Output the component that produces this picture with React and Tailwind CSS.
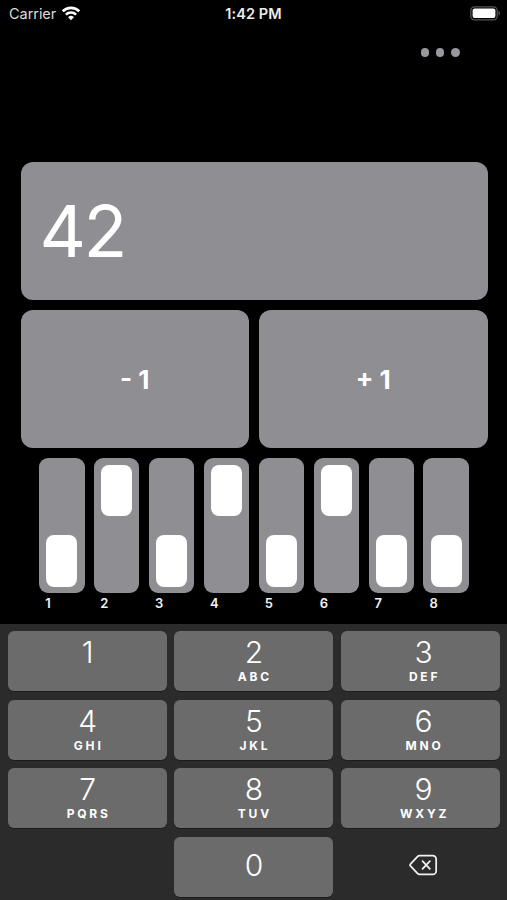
import React, { useState } from "react";

// Keys of the number pad, in reading order
const KEYS = [
  { digit: "1", letters: "" },
  { digit: "2", letters: "ABC" },
  { digit: "3", letters: "DEF" },
  { digit: "4", letters: "GHI" },
  { digit: "5", letters: "JKL" },
  { digit: "6", letters: "MNO" },
  { digit: "7", letters: "PQRS" },
  { digit: "8", letters: "TUV" },
  { digit: "9", letters: "WXYZ" },
];

// Bit positions, lowest first
const BITS = [0, 1, 2, 3, 4, 5, 6, 7];

/**
 * StatusBar shows the carrier, the clock and the battery.
 */
const StatusBar = () => (
  <div className="grid grid-cols-3 items-center h-7 pl-[9px] pr-[6px] text-[14.5px] leading-none">
    <div className="flex items-center gap-[5px] text-[#dcdcdc]">
      <span className="tracking-[-0.05px]">Carrier</span>
      <svg width="20" height="15" viewBox="0 0 20 15" className="mb-[2px]" fill="none" stroke="#fff">
        <path d="M1.7 5.3a11.7 11.7 0 0 1 16.6 0" strokeWidth="2.7" />
        <path d="M4.9 8.7a7.2 7.2 0 0 1 10.2 0" strokeWidth="2.5" />
        <path d="M10 14.2 7.1 11.3a4.1 4.1 0 0 1 5.8 0Z" fill="#fff" stroke="none" />
      </svg>
    </div>
    <span className="pr-[3px] text-center font-semibold text-[#ececec] text-[14.5px] tracking-[0.1px]">
      1:42 PM
    </span>
    <svg className="justify-self-end mb-[2px]" width="31" height="15" viewBox="0 0 31 15">
      <rect x="0.8" y="0.8" width="26.4" height="13" rx="3.8" fill="none" stroke="#555" strokeWidth="1.3" />
      <rect x="2.6" y="2.6" width="22.8" height="9.4" rx="2" fill="#fff" />
      <path d="M28.6 5v4.6c1.7-.6 1.7-4 0-4.6Z" fill="#666" />
    </svg>
  </div>
);

/**
 * BitSwitch is one vertical toggle with its number underneath.
 */
const BitSwitch = ({ label, on, onToggle }) => (
  <div>
    <button
      onClick={onToggle}
      className={`flex flex-col items-center w-full h-[135px] rounded-[9px] bg-[#8e8e93] py-[6.5px] ${
        on ? "justify-start" : "justify-end"
      }`}
    >
      <span className="w-[31px] h-[51.5px] rounded-[8px] bg-white" />
    </button>
    <div className="pl-[6px] pt-[4px] text-[13px] leading-[13px] font-semibold text-[#f2f2f2]">
      {label}
    </div>
  </div>
);

/**
 * PadKey is one key of the number pad.
 */
const PadKey = ({ digit, letters, onPress }) => (
  <button
    onClick={onPress}
    className="flex flex-col items-center h-[60px] rounded-[6px] bg-[#6b6b6b] pt-[6px] text-white shadow-[0_1px_0_#1c1c1c] nth-[3n]:pl-[7px]"
  >
    <span className="text-[30px] leading-[31px] font-[350]">{digit}</span>
    <span className="text-[12px] leading-[18px] pl-[2px] font-bold tracking-[2.8px]">
      {letters}
    </span>
  </button>
);

const App = () => {
  const [value, setValue] = useState(42);

  // Keep the value within a single byte
  const update = (next) => setValue(Math.max(0, Math.min(255, next)));

  return (
    <div className="flex flex-col w-[507px] h-[900px] overflow-hidden bg-black text-white font-['Inter',sans-serif]">
      <StatusBar />

      {/* Menu dots */}
      <div className="flex justify-end gap-[6.7px] pt-[20px] pr-[47.5px]">
        <span className="w-[8.5px] h-[8.5px] rounded-full bg-[#98989d]" />
        <span className="w-[8.5px] h-[8.5px] rounded-full bg-[#98989d]" />
        <span className="w-[8.5px] h-[8.5px] rounded-full bg-[#98989d]" />
      </div>

      {/* Value and step buttons */}
      <div className="grid grid-cols-2 gap-[10px] mt-[105.5px] ml-[20.5px] mr-[19.5px]">
        <div className="col-span-2 flex items-center h-[138px] rounded-[12px] bg-[#8e8e93] pl-[19px] text-[72px] leading-none tracking-[-2.5px]">
          {value}
        </div>
        <button
          onClick={() => update(value - 1)}
          className="h-[138px] rounded-[12px] bg-[#8e8e93] text-[26px] font-bold"
        >
          - 1
        </button>
        <button
          onClick={() => update(value + 1)}
          className="h-[138px] rounded-[12px] bg-[#8e8e93] text-[26px] font-bold"
        >
          + 1
        </button>
      </div>

      {/* One switch per bit */}
      <div className="grid grid-cols-8 gap-[9.6px] mt-[10px] ml-[39.3px] mr-[38.3px]">
        {BITS.map((bit) => (
          <BitSwitch
            key={bit}
            label={bit + 1}
            on={((value >> bit) & 1) === 1}
            onToggle={() => update(value ^ (1 << bit))}
          />
        ))}
      </div>

      {/* Number pad */}
      <div className="grid grid-cols-3 content-start gap-x-[7.2px] gap-y-[8.5px] mt-auto h-[276px] pl-[8.2px] pr-[7.4px] pt-[7px] bg-[#2b2b2b]">
        {KEYS.map((key) => (
          <PadKey
            key={key.digit}
            digit={key.digit}
            letters={key.letters}
            onPress={() => update(value * 10 + Number(key.digit))}
          />
        ))}
        <button
          onClick={() => update(value * 10)}
          className="col-start-2 h-[60px] rounded-[6px] bg-[#6b6b6b] pb-[2px] text-[30px] font-[350] shadow-[0_1px_0_#1c1c1c]"
        >
          0
        </button>
        <button
          onClick={() => update(Math.floor(value / 10))}
          className="flex items-center justify-center pb-[3px] pl-[7px]"
        >
          <svg width="29" height="22" viewBox="0 0 30 22" fill="none" stroke="#f2f2f2" strokeWidth="1.8" strokeLinecap="round" strokeLinejoin="round">
            <path d="M10.8 1.2H24.5a3.6 3.6 0 0 1 3.6 3.6v12.4a3.6 3.6 0 0 1-3.6 3.6H10.8a2.6 2.6 0 0 1-1.8-.8L1.7 12.2a1.7 1.7 0 0 1 0-2.4L9 2a2.6 2.6 0 0 1 1.8-.8Z" />
            <path d="m14 7 7.6 8M21.6 7 14 15" />
          </svg>
        </button>
      </div>
    </div>
  );
};

export default App;
